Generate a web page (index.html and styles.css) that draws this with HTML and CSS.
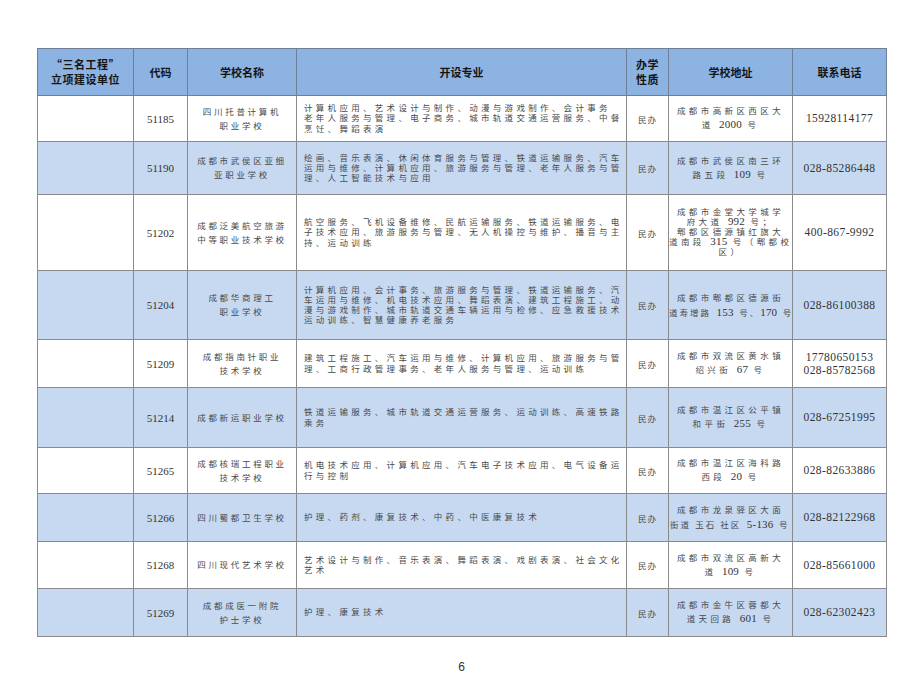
FILE: index.html
```html
<!DOCTYPE html>
<html lang="zh-CN">
<head>
<meta charset="utf-8">
<title>三名工程立项建设单位</title>
<link rel="stylesheet" href="styles.css">
</head>
<body>
<div class="page">
  <table class="grid">
    <colgroup>
      <col class="c1"><col class="c2"><col class="c3"><col class="c4"><col class="c5"><col class="c6"><col class="c7">
    </colgroup>
    <thead>
      <tr class="h-head">
        <th class="th-lines">“三名工程”<br>立项建设单位</th>
        <th>代码</th>
        <th>学校名称</th>
        <th>开设专业</th>
        <th class="th-lines">办学<br>性质</th>
        <th>学校地址</th>
        <th>联系电话</th>
      </tr>
    </thead>
    <tbody>
      <tr class="r1">
        <td></td>
        <td class="code">51185</td>
        <td class="name">四川托普计算机<br>职业学校</td>
        <td class="major">计算机应用、艺术设计与制作、动漫与游戏制作、会计事务<br>老年人服务与管理、电子商务、城市轨道交通运营服务、中餐<br>烹饪、舞蹈表演</td>
        <td class="kind">民办</td>
        <td class="addr">成都市高新区西区大<br>道 <span class="n">2000</span> 号</td>
        <td class="tel">15928114177</td>
      </tr>
      <tr class="r2 alt">
        <td></td>
        <td class="code">51190</td>
        <td class="name">成都市武侯区亚细<br>亚职业学校</td>
        <td class="major">绘画、音乐表演、休闲体育服务与管理、铁道运输服务、汽车<br>运用与维修、计算机应用、旅游服务与管理、老年人服务与管<br>理、人工智能技术与应用</td>
        <td class="kind">民办</td>
        <td class="addr">成都市武侯区南三环<br>路五段 <span class="n">109</span> 号</td>
        <td class="tel">028-85286448</td>
      </tr>
      <tr class="r3">
        <td></td>
        <td class="code">51202</td>
        <td class="name">成都泛美航空旅游<br>中等职业技术学校</td>
        <td class="major">航空服务、飞机设备维修、民航运输服务、铁道运输服务、电<br>子技术应用、旅游服务与管理、无人机操控与维护、播音与主<br>持、运动训练</td>
        <td class="kind">民办</td>
        <td class="addr addr-tight">成都市金堂大学城学<br>府大道 <span class="n">992</span> 号；<br>郫都区德源镇红旗大<br>道南段 <span class="n">315</span> 号（郫都校<br>区）</td>
        <td class="tel">400-867-9992</td>
      </tr>
      <tr class="r4 alt">
        <td></td>
        <td class="code">51204</td>
        <td class="name">成都华商理工<br>职业学校</td>
        <td class="major">计算机应用、会计事务、旅游服务与管理、铁道运输服务、汽<br>车运用与维修、机电技术应用、舞蹈表演、建筑工程施工、动<br>漫与游戏制作、城市轨道交通车辆运用与检修、应急救援技术<br>运动训练、智慧健康养老服务</td>
        <td class="kind">民办</td>
        <td class="addr addr-wide">成都市郫都区德源街<br><span class="sq">道寿增路</span> <span class="n">153</span> <span class="sq">号、</span><span class="n">170</span> 号</td>
        <td class="tel">028-86100388</td>
      </tr>
      <tr class="r5">
        <td></td>
        <td class="code">51209</td>
        <td class="name">成都指南针职业<br>技术学校</td>
        <td class="major">建筑工程施工、汽车运用与维修、计算机应用、旅游服务与管<br>理、工商行政管理事务、老年人服务与管理、运动训练</td>
        <td class="kind">民办</td>
        <td class="addr">成都市双流区黄水镇<br>绍兴街 <span class="n">67</span> 号</td>
        <td class="tel">17780650153<br>028-85782568</td>
      </tr>
      <tr class="r6 alt">
        <td></td>
        <td class="code">51214</td>
        <td class="name">成都新运职业学校</td>
        <td class="major">铁道运输服务、城市轨道交通运营服务、运动训练、高速铁路<br>乘务</td>
        <td class="kind">民办</td>
        <td class="addr">成都市温江区公平镇<br>和平街 <span class="n">255</span> 号</td>
        <td class="tel">028-67251995</td>
      </tr>
      <tr class="r7">
        <td></td>
        <td class="code">51265</td>
        <td class="name">成都核瑞工程职业<br>技术学校</td>
        <td class="major">机电技术应用、计算机应用、汽车电子技术应用、电气设备运<br>行与控制</td>
        <td class="kind">民办</td>
        <td class="addr">成都市温江区海科路<br>西段 <span class="n">20</span> 号</td>
        <td class="tel">028-82633886</td>
      </tr>
      <tr class="r8 alt">
        <td></td>
        <td class="code">51266</td>
        <td class="name">四川蜀都卫生学校</td>
        <td class="major">护理、药剂、康复技术、中药、中医康复技术</td>
        <td class="kind">民办</td>
        <td class="addr addr-wide">成都市龙泉驿区大面<br><span class="sq">街道 玉石 社区</span> <span class="n">5-136</span> 号</td>
        <td class="tel">028-82122968</td>
      </tr>
      <tr class="r9">
        <td></td>
        <td class="code">51268</td>
        <td class="name">四川现代艺术学校</td>
        <td class="major">艺术设计与制作、音乐表演、舞蹈表演、戏剧表演、社会文化<br>艺术</td>
        <td class="kind">民办</td>
        <td class="addr">成都市双流区高新大<br>道 <span class="n">109</span> 号</td>
        <td class="tel">028-85661000</td>
      </tr>
      <tr class="r10 alt">
        <td></td>
        <td class="code">51269</td>
        <td class="name">成都成医一附院<br>护士学校</td>
        <td class="major">护理、康复技术</td>
        <td class="kind">民办</td>
        <td class="addr">成都市金牛区蓉都大<br>道天回路 <span class="n">601</span> 号</td>
        <td class="tel">028-62302423</td>
      </tr>
    </tbody>
  </table>
  <div class="pageno">6</div>
</div>
</body>
</html>
```
FILE: styles.css
```css
html, body {
  margin: 0;
  padding: 0;
  background: #ffffff;
}

.page {
  padding: 48px 0 0 37px;
  width: 849px;
}

.grid {
  border-collapse: collapse;
  table-layout: fixed;
  width: 849px;
  font-family: "Liberation Serif", "Noto Sans CJK SC", serif;
  color: #4a4a4a;
}

.c1 { width: 96px; }
.c2 { width: 54px; }
.c3 { width: 109px; }
.c4 { width: 330px; }
.c5 { width: 42px; }
.c6 { width: 124px; }
.c7 { width: 94px; }

.grid th,
.grid td {
  border: 1px solid #8a8a8a;
  padding: 0;
  text-align: center;
  vertical-align: middle;
  white-space: nowrap;
}

.grid th {
  background: #8db3e2;
  font-family: "Noto Sans CJK SC", sans-serif;
  font-weight: 700;
  font-size: 11px;
  line-height: 15px;
  color: #151515;
  border-color: #6f7f96;
}

.th-lines {
  font-size: 10.5px;
  line-height: 14px;
  letter-spacing: 0.5px;
}

.alt td {
  background: #c6d9f1;
}

.h-head { height: 47px; }
.r1 { height: 46px; }
.r2 { height: 53px; }
.r3 { height: 76px; }
.r4 { height: 69px; }
.r5 { height: 48px; }
.r6 { height: 60px; }
.r7 { height: 46px; }
.r8 { height: 48px; }
.r9 { height: 47px; }
.r10 { height: 48px; }

.code {
  font-size: 11px;
  color: #333333;
}

.tel {
  font-size: 11.5px;
  letter-spacing: 0.4px;
  line-height: 13px;
  color: #333333;
}

.name {
  font-size: 8.5px;
  letter-spacing: 2.7px;
  line-height: 14px;
}

.major {
  text-align: left !important;
  padding-left: 7px !important;
  font-size: 8.5px;
  letter-spacing: 3.3px;
  line-height: 10.2px;
}

.kind {
  font-size: 8.5px;
  letter-spacing: 1px;
}

.addr {
  font-size: 8.5px;
  letter-spacing: 3.4px;
  line-height: 13px;
}

.addr-tight {
  line-height: 9.4px;
}

.addr-wide {
  line-height: 14px;
}

.sq {
  letter-spacing: 2px;
}

.n {
  font-size: 11px;
  letter-spacing: 0.2px;
  color: #333333;
}

.pageno {
  margin-top: 23px;
  text-align: center;
  font-family: "Liberation Sans", sans-serif;
  font-size: 12px;
  line-height: 14px;
  color: #333333;
}
```
